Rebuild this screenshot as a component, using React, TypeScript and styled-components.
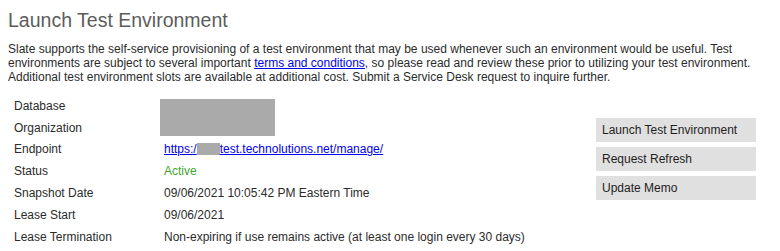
import React from "react";
import styled, { createGlobalStyle } from "styled-components";

const GlobalStyle = createGlobalStyle`
    body {
        margin: 0;
        background: #ffffff;
        font-family: "Liberation Sans", Arial, sans-serif;
        color: #2b2b2b;
    }
`;

const Page = styled.div`
    padding: 8px 8px 0 8px;
    font-size: 12px;
`;

const Title = styled.h1`
    margin: 0;
    height: 24px;
    line-height: 24px;
    font-size: 19.5px;
    font-weight: normal;
    color: #5c5c5c;
`;

const Intro = styled.p`
    margin: 10px 0 0 0;
    line-height: 14px;
    width: 762px;
`;

const TermsLink = styled.a`
    color: #0000ee;
    text-decoration: underline;
`;

const Body = styled.div`
    display: flex;
    margin-top: 11px;
`;

const Details = styled.div`
    flex: 1;
    display: grid;
    grid-template-columns: 150px 1fr;
    grid-auto-rows: 21.8px;
    align-items: center;
    padding-left: 6px;
`;

const Label = styled.div``;

const Value = styled.div<{ $tone?: "active" }>`
    color: ${(p) => (p.$tone === "active" ? "#3fa62f" : "inherit")};
`;

const Redacted = styled.div`
    grid-row: span 2;
    align-self: start;
    margin: 4px 0 0 -4px;
    width: 115px;
    height: 37px;
    background: #aaaaaa;
`;

const Hidden = styled.span`
    display: inline-block;
    width: 23px;
    height: 12px;
    vertical-align: -2px;
    background: #aaaaaa;
`;

const Actions = styled.div`
    display: flex;
    flex-direction: column;
    gap: 5px;
    width: 160px;
    margin: 23px 16px 0 0;
`;

const ActionButton = styled.button`
    height: 24px;
    padding: 0 6px;
    border: none;
    background: #e0e0e0;
    font-family: inherit;
    font-size: 12px;
    color: #1e1e1e;
    text-align: left;
    cursor: pointer;
`;

const rows: { label: string; value: React.ReactNode; tone?: "active" }[] = [
    {
        label: "Endpoint",
        value: (
            <TermsLink href="#">
                https:/<Hidden />test.technolutions.net/manage/
            </TermsLink>
        ),
    },
    { label: "Status", value: "Active", tone: "active" },
    { label: "Snapshot Date", value: "09/06/2021 10:05:42 PM Eastern Time" },
    { label: "Lease Start", value: "09/06/2021" },
    {
        label: "Lease Termination",
        value: "Non-expiring if use remains active (at least one login every 30 days)",
    },
];

export default function App() {
    return (
        <Page>
            <GlobalStyle />
            <Title>Launch Test Environment</Title>
            <Intro>
                Slate supports the self-service provisioning of a test environment that may be used
                whenever such an environment would be useful. Test environments are subject to several
                important <TermsLink href="#">terms and conditions</TermsLink>, so please read and
                review these prior to utilizing your test environment. Additional test environment
                slots are available at additional cost. Submit a Service Desk request to inquire
                further.
            </Intro>
            <Body>
                <Details>
                    <Label>Database</Label>
                    <Redacted />
                    <Label>Organization</Label>
                    {rows.map((r) => (
                        <React.Fragment key={r.label}>
                            <Label>{r.label}</Label>
                            <Value $tone={r.tone}>{r.value}</Value>
                        </React.Fragment>
                    ))}
                </Details>
                <Actions>
                    <ActionButton>Launch Test Environment</ActionButton>
                    <ActionButton>Request Refresh</ActionButton>
                    <ActionButton>Update Memo</ActionButton>
                </Actions>
            </Body>
        </Page>
    );
}
